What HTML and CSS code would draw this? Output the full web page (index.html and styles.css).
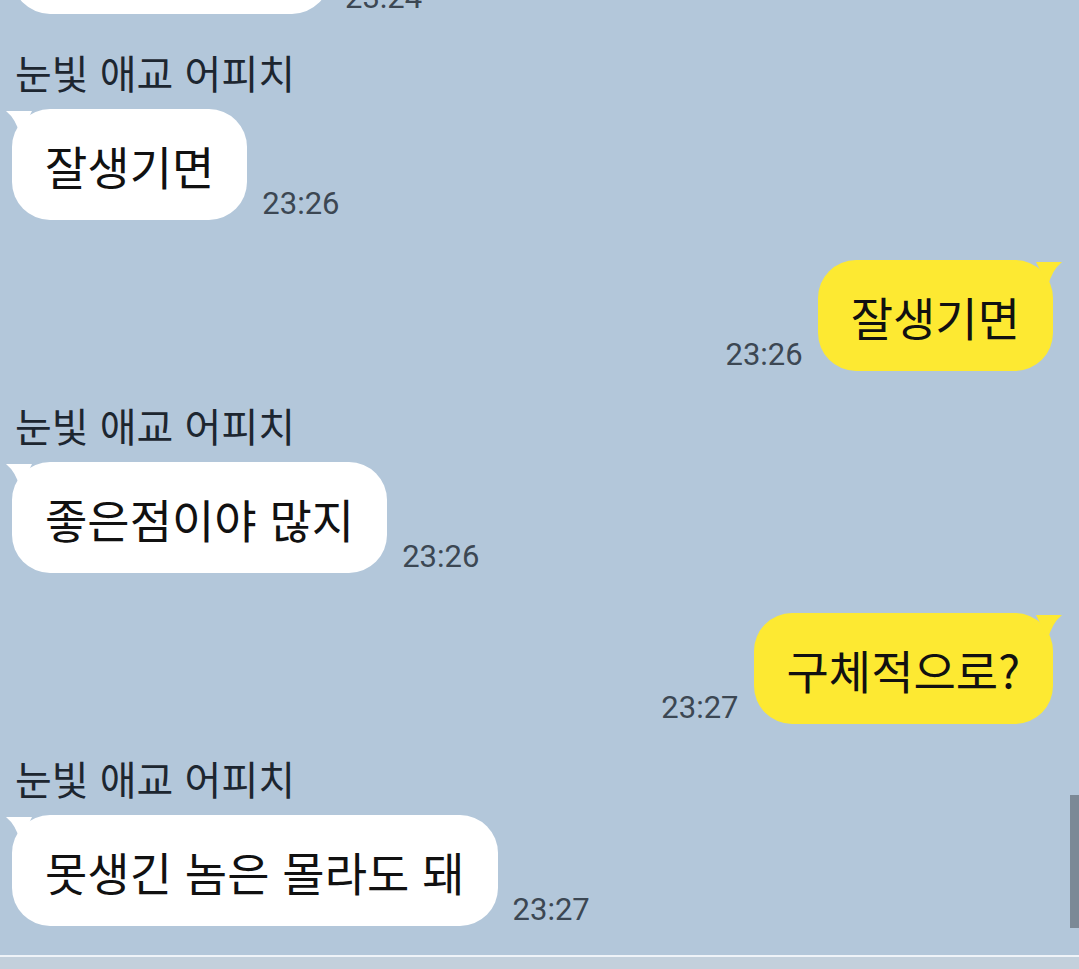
FILE: index.html
```html
<!DOCTYPE html>
<html lang="ko">
<head>
    <meta charset="UTF-8">
    <meta name="viewport" content="width=device-width, initial-scale=1.0">
    <title>채팅</title>
    <link rel="stylesheet" href="styles.css">
</head>
<body>
    <div class="chat">
        <div class="row in first">
            <div class="bubble wide"></div>
            <span class="time">23:24</span>
        </div>

        <div class="name">눈빛 애교 어피치</div>
        <div class="row in">
            <div class="bubble">잘생기면</div>
            <span class="time">23:26</span>
        </div>
        <div class="row out">
            <span class="time">23:26</span>
            <div class="bubble">잘생기면</div>
        </div>

        <div class="name">눈빛 애교 어피치</div>
        <div class="row in">
            <div class="bubble">좋은점이야 많지</div>
            <span class="time">23:26</span>
        </div>
        <div class="row out">
            <span class="time">23:27</span>
            <div class="bubble">구체적으로?</div>
        </div>

        <div class="name">눈빛 애교 어피치</div>
        <div class="row in">
            <div class="bubble">못생긴 놈은 몰라도 돼</div>
            <span class="time">23:27</span>
        </div>

        <div class="scrollbar"></div>
    </div>
    <div class="footer"></div>
</body>
</html>
```

FILE: styles.css
```css
body {
    margin: 0;
    background: #b3c7da;
    font-family: "Noto Sans CJK KR", "Noto Sans", sans-serif;
    color: #111;
}

.chat {
    position: relative;
    height: 955px;
    overflow: hidden;
    padding: 0 26px 0 12px;
    display: flex;
    flex-direction: column;
}

.row {
    display: flex;
    align-items: flex-end;
    gap: 15px;
}

.row.out {
    justify-content: flex-end;
    margin-top: 40px;
}

.row.first {
    margin-top: -97px;
}

.name {
    font-size: 40px;
    line-height: 44px;
    color: #1d2630;
    padding-left: 3px;
    margin: 32px 0 15px;
}

.row.first + .name {
    margin-top: 36px;
}

.bubble {
    position: relative;
    height: 111px;
    display: flex;
    align-items: center;
    padding: 0 33px;
    border-radius: 38px;
    background: #fff;
    font-size: 46px;
    white-space: nowrap;
}

.bubble.wide {
    width: 252px;
}

/* little tail at the top corner */
.bubble::before {
    content: "";
    position: absolute;
    top: 2px;
    width: 26px;
    height: 24px;
    background: inherit;
}

.in .bubble::before {
    left: -6px;
    clip-path: path("M0 0 L26 0 L14 24 Q10 8 0 0 Z");
}

.out .bubble {
    background: #fde932;
}

.out .bubble::before {
    right: -9px;
    clip-path: path("M26 0 L0 0 L12 24 Q16 8 26 0 Z");
}

.time {
    font-family: Roboto, "Liberation Sans", sans-serif;
    font-size: 31px;
    line-height: 1;
    color: #3c4753;
    margin-bottom: 1px;
}

.scrollbar {
    position: absolute;
    right: 0;
    top: 795px;
    width: 9px;
    height: 133px;
    background: #7b8996;
}

.footer {
    height: 12px;
    border-top: 2px solid #eef3f8;
    background: #c3d0dc;
}
```
